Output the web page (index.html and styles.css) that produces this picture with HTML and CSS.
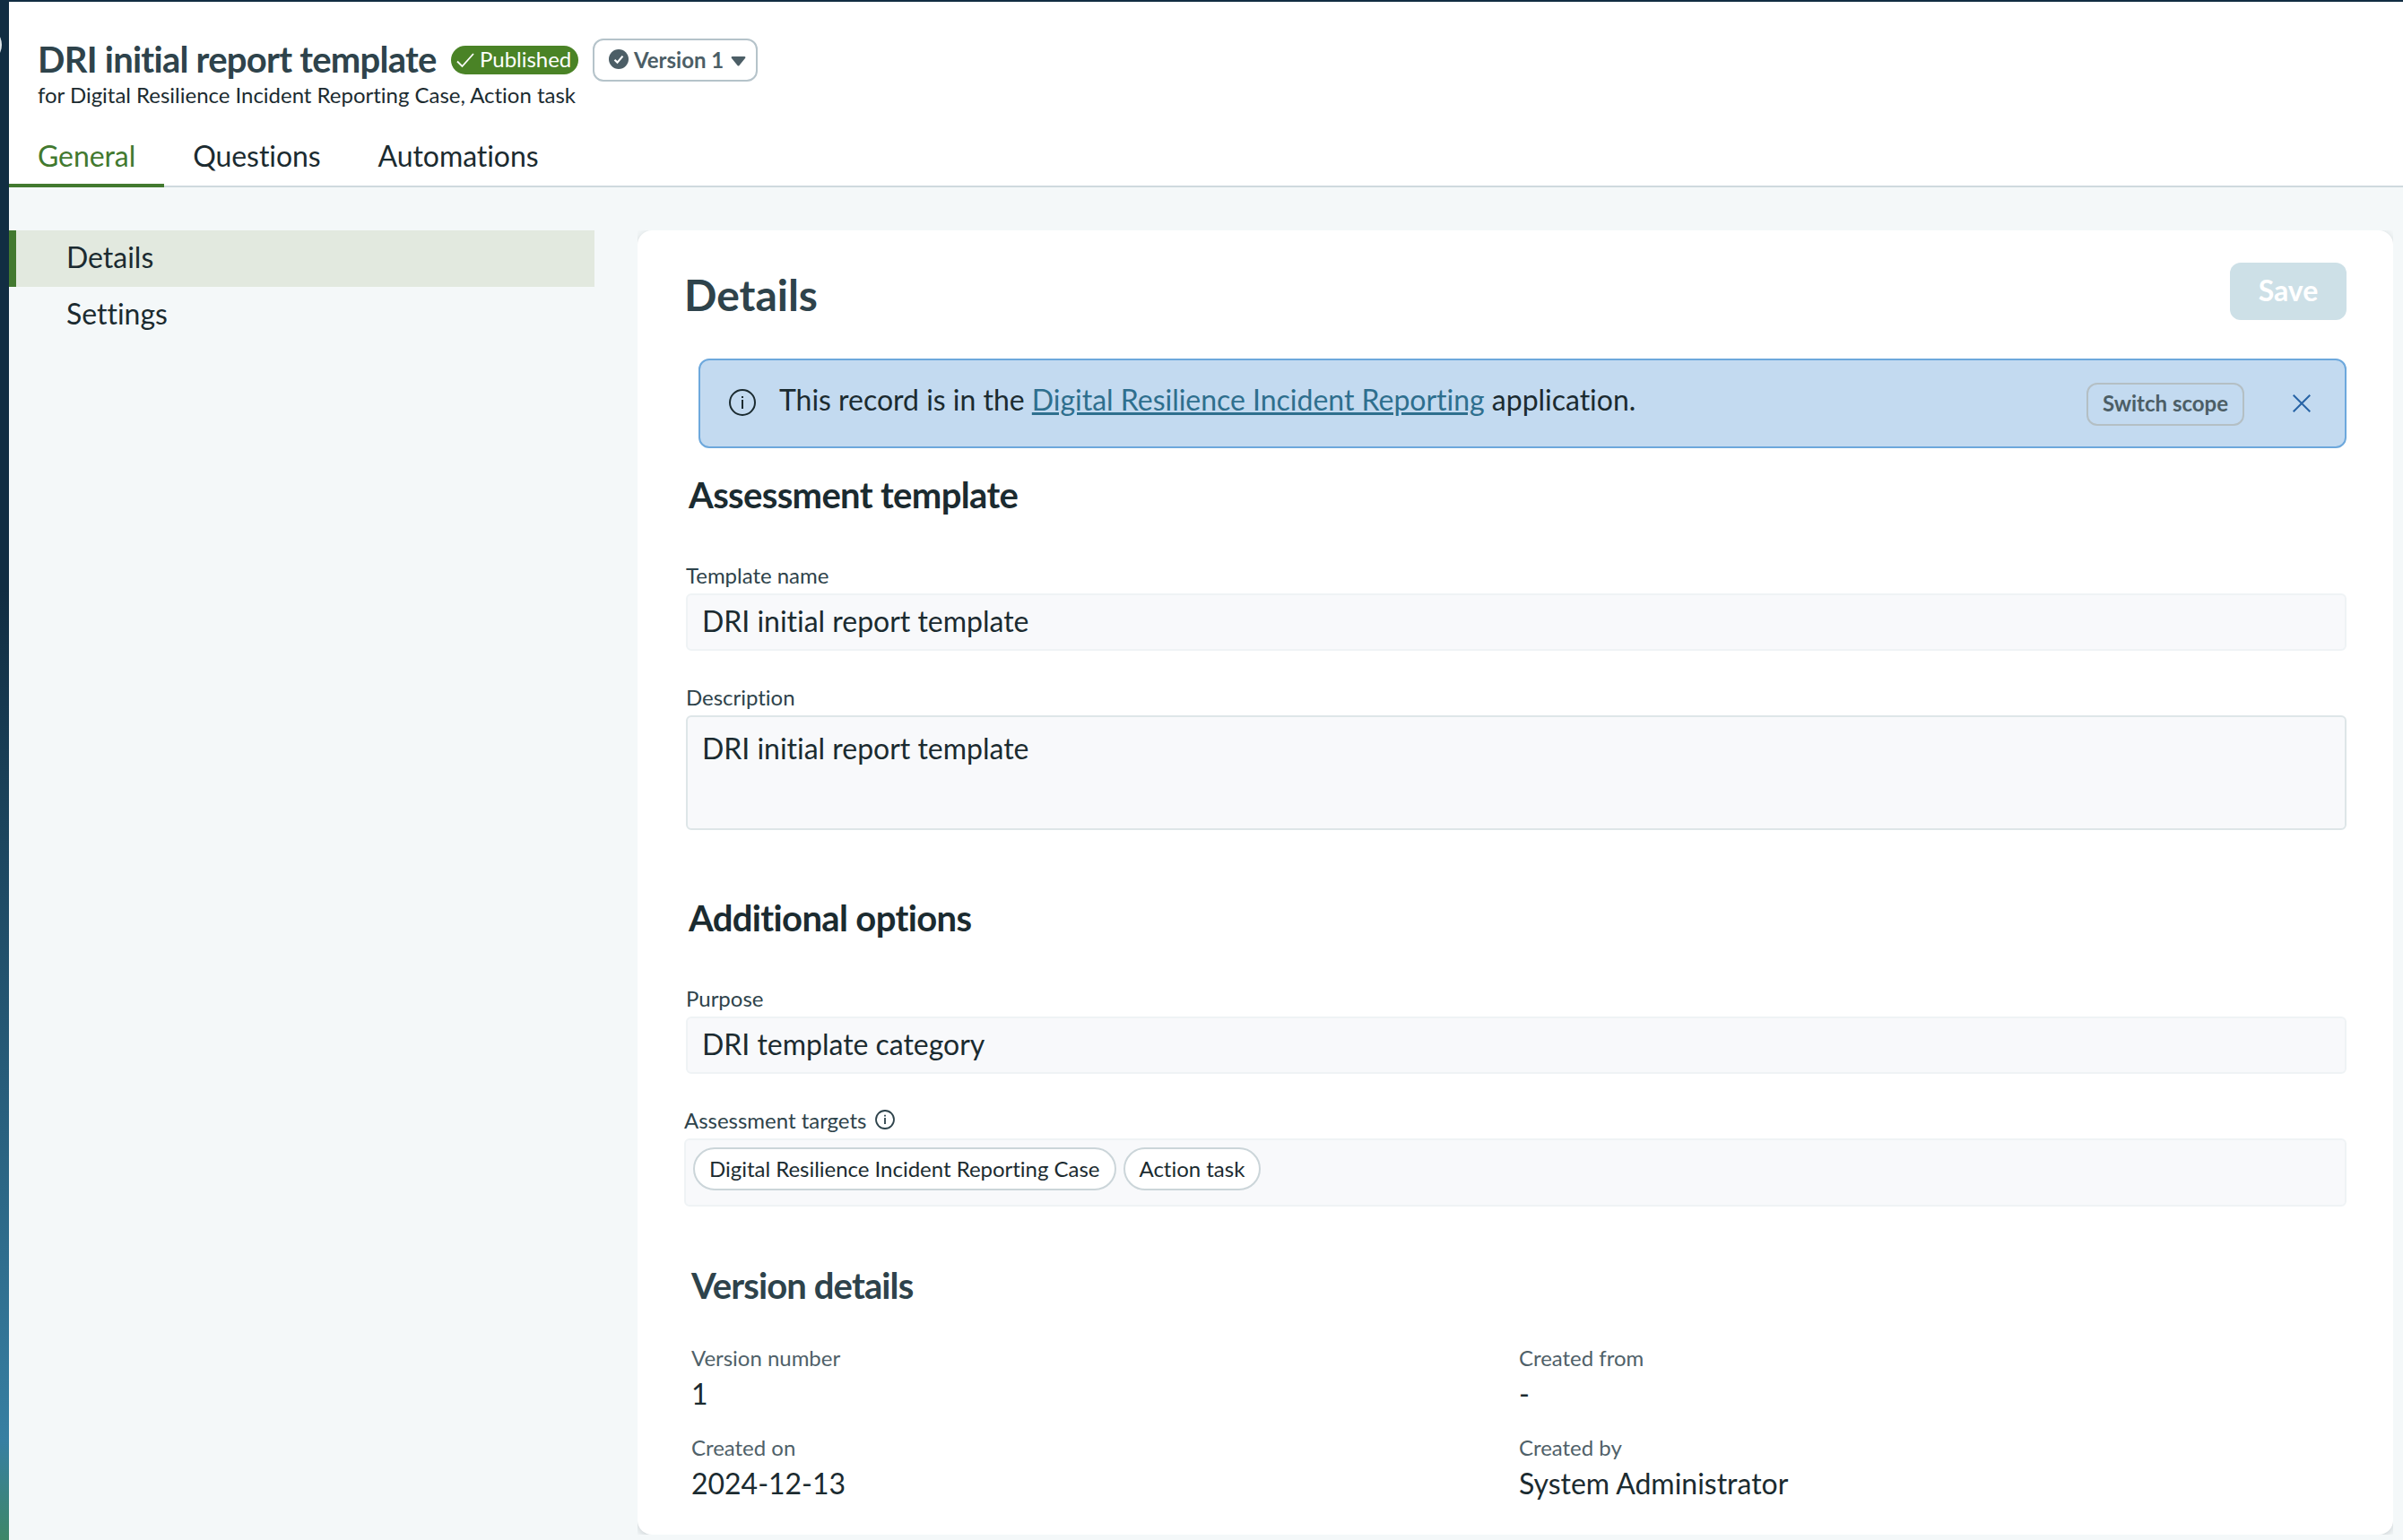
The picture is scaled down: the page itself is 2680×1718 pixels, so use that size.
FILE: index.html
```html
<!DOCTYPE html>
<html lang="en">
<head>
    <meta charset="UTF-8">
    <meta name="viewport" content="width=device-width, initial-scale=1.0">
    <title>DRI initial report template</title>
    <link rel="stylesheet" href="styles.css">
</head>
<body>
    <div class="app">
        <div class="nav-strip"></div>

        <div class="page">
            <!-- Header -->
            <header class="header">
                <div class="title-row">
                    <h1>DRI initial report template</h1>
                    <span class="badge">
                        <svg width="22" height="18" viewBox="0 0 22 18"><path d="M2 10.5L7.5 16L20 2" fill="none" stroke="currentColor" stroke-width="1.8"/></svg>
                        <span>Published</span>
                    </span>
                    <button class="version-btn">
                        <svg class="check" width="22" height="22" viewBox="0 0 22 22"><circle cx="11" cy="11" r="11" fill="currentColor"/><path d="M6.5 11.8L9.5 14.6L15.5 7.6" fill="none" stroke="#fff" stroke-width="2.2"/></svg>
                        <span>Version 1</span>
                        <svg class="caret" width="17" height="11" viewBox="0 0 17 11"><path d="M1.5 0H15.5Q17 0.4 16.2 1.8L9.3 10.2Q8.5 11 7.7 10.2L0.8 1.8Q0 0.4 1.5 0Z" fill="currentColor"/></svg>
                    </button>
                </div>
                <p class="subtitle">for Digital Resilience Incident Reporting Case, Action task</p>
                <nav class="tabs">
                    <a class="tab active">General</a>
                    <a class="tab">Questions</a>
                    <a class="tab">Automations</a>
                </nav>
            </header>

            <div class="content">
                <!-- Side menu -->
                <aside class="sidebar">
                    <a class="side-item active">Details</a>
                    <a class="side-item">Settings</a>
                </aside>

                <div class="card-wrap">
                    <main class="card">
                        <div class="card-head">
                            <h2>Details</h2>
                            <button class="save-btn" disabled>Save</button>
                        </div>

                        <div class="alert">
                            <svg class="alert-icon" width="30" height="30" viewBox="0 0 30 30"><circle cx="15" cy="15" r="14" fill="none" stroke="currentColor" stroke-width="2"/><path d="M15 12V22M15 8V10" stroke="currentColor" stroke-width="2"/></svg>
                            <p>This record is in the <a>Digital Resilience Incident Reporting</a> application.</p>
                            <button class="scope-btn">Switch scope</button>
                            <svg class="close" width="20" height="20" viewBox="0 0 20 20"><path d="M0.7 0.7L19.3 19.3M19.3 0.7L0.7 19.3" stroke="currentColor" stroke-width="2"/></svg>
                        </div>

                        <!-- Assessment template -->
                        <h3 class="heading-template">Assessment template</h3>
                        <div class="field">
                            <label>Template name</label>
                            <div class="input">DRI initial report template</div>
                        </div>
                        <div class="field">
                            <label>Description</label>
                            <div class="input textarea">DRI initial report template</div>
                        </div>

                        <!-- Additional options -->
                        <h3 class="heading-options">Additional options</h3>
                        <div class="field">
                            <label>Purpose</label>
                            <div class="input">DRI template category</div>
                        </div>
                        <div class="field targets">
                            <label>Assessment targets
                                <svg width="22" height="22" viewBox="0 0 22 22"><circle cx="11" cy="11" r="10" fill="none" stroke="currentColor" stroke-width="1.8"/><path d="M11 9V16M11 5.8V7.6" stroke="currentColor" stroke-width="1.8"/></svg>
                            </label>
                            <div class="pills">
                                <span class="pill">Digital Resilience Incident Reporting Case</span>
                                <span class="pill">Action task</span>
                            </div>
                        </div>

                        <!-- Version details -->
                        <h3 class="heading-version">Version details</h3>
                        <dl class="version-grid">
                            <div>
                                <dt>Version number</dt>
                                <dd>1</dd>
                            </div>
                            <div>
                                <dt>Created from</dt>
                                <dd>-</dd>
                            </div>
                            <div>
                                <dt>Created on</dt>
                                <dd>2024-12-13</dd>
                            </div>
                            <div>
                                <dt>Created by</dt>
                                <dd>System Administrator</dd>
                            </div>
                        </dl>
                    </main>
                </div>
            </div>
        </div>
    </div>
</body>
</html>
```
FILE: styles.css
```css
/* Reset & Base Styles */
* {
    box-sizing: border-box;
    margin: 0;
    padding: 0;
}

body {
    font-family: Lato, 'Liberation Sans', sans-serif;
    font-size: 32px;
    font-variant-ligatures: none;
    letter-spacing: -0.02px;
    color: #1b2b30;
    background: #f4f8f9;
    overflow: hidden;
}

button {
    font-family: inherit;
    font-weight: 700;
}

svg {
    display: block;
    flex: none;
}

.app {
    display: flex;
    height: 1718px;
    border-top: 2px solid #112d42;
}

/* Edge of the global navigation */
.nav-strip {
    position: relative;
    width: 10px;
    overflow: hidden;
    background: linear-gradient(#112d42 0, #112d42 655px, #377fa2 1605px, #3e8768 1716px);
}

.nav-strip::before {
    content: "";
    position: absolute;
    left: -38px;
    top: 28px;
    width: 40px;
    height: 40px;
    border-radius: 50%;
    background: #dfe5e8;
}

.page {
    flex: 1;
}

/* Header */
.header {
    height: 207px;
    padding-top: 41px;
    background: #fff;
    border-bottom: 2px solid #cfd9de;
}

.title-row {
    display: flex;
    align-items: center;
    height: 48px;
    padding-left: 32px;
}

h1 {
    width: 461px;
    padding-bottom: 2px;
    font-size: 40px;
    line-height: 48px;
    letter-spacing: -0.75px;
    white-space: nowrap;
    color: #2e434b;
}

.badge {
    display: flex;
    align-items: center;
    gap: 5px;
    width: 142px;
    height: 32px;
    padding-left: 5px;
    border-radius: 16px;
    background: #4a8326;
    color: #fff;
    font-size: 24px;
    line-height: 30px;
}

.badge span {
    padding-bottom: 2px;
}

.version-btn {
    display: flex;
    align-items: center;
    width: 184px;
    height: 48px;
    margin-left: 16px;
    padding-left: 16px;
    border: 2px solid #b5c3ca;
    border-radius: 12px;
    background: #fff;
    color: #4c5e66;
    font-size: 24px;
}

.version-btn span {
    width: 108px;
    margin-left: 6px;
    padding-bottom: 2px;
    text-align: left;
}

.version-btn .check {
    margin-top: -2px;
}

.version-btn .caret {
    margin-top: 2px;
}

.subtitle {
    padding-left: 32px;
    font-size: 24px;
    line-height: 30px;
}

.tabs {
    display: flex;
    margin-top: 31px;
    letter-spacing: -0.07px;
}

.tab {
    height: 57px;
    padding: 0 32px;
    line-height: 44px;
    border-bottom: 4px solid transparent;
}

.tab.active {
    color: #42792f;
    border-bottom-color: #42792f;
}

/* Content */
.content {
    display: flex;
    gap: 48px;
    padding-top: 48px;
}

.sidebar {
    width: 653px;
}

.side-item {
    display: block;
    height: 63px;
    padding-left: 56px;
    line-height: 60px;
    border-left: 8px solid transparent;
}

.side-item.active {
    background: #e2e9df;
    border-left-color: #42792f;
}

.card-wrap {
    width: 1958px;
    height: 1455px;
    overflow: hidden;
}

.card {
    height: 100%;
    padding: 36px 52px 0;
    background: #fff;
    border-radius: 16px;
    box-shadow: 0 2px 8px rgba(30, 45, 55, 0.2);
}

.card-head {
    display: flex;
    justify-content: space-between;
    height: 64px;
}

h2 {
    font-size: 48px;
    line-height: 71px;
    color: #2e434b;
}

.save-btn {
    width: 130px;
    height: 64px;
    padding-bottom: 3px;
    border: 0;
    border-radius: 12px;
    background: #cde0e7;
    color: #fff;
    font-size: 32px;
}

/* Info message */
.alert {
    display: flex;
    align-items: center;
    height: 100px;
    margin: 43px 0 0 16px;
    padding: 0 38px 0 32px;
    border: 2px solid #6da8dc;
    border-radius: 12px;
    background: #c3daf0;
}

.alert-icon {
    margin-top: -2px;
}

.alert p {
    flex: 1;
    margin-left: 26px;
    padding-bottom: 9px;
}

.alert a {
    color: #2e6f8e;
    text-decoration: underline;
    text-decoration-thickness: 3px;
}

.scope-btn {
    width: 176px;
    height: 48px;
    margin: 2px 54px 0 0;
    padding-bottom: 3px;
    border: 2px solid #b4bfc4;
    border-radius: 12px;
    background: transparent;
    color: #4c5e66;
    font-size: 24px;
}

.close {
    color: #2763a5;
}

/* Form */
h3 {
    margin-left: 5px;
    font-size: 40px;
    line-height: 48px;
    letter-spacing: -0.65px;
}

.heading-template {
    margin-top: 28px;
}

.heading-options {
    margin-top: 74px;
}

.heading-version {
    margin: 64px 0 0 8px;
    letter-spacing: -0.88px;
    color: #2e434b;
}

.field {
    margin: 36px 0 0 2px;
}

h3 + .field {
    margin-top: 50px;
}

label {
    display: flex;
    align-items: center;
    font-size: 24px;
    line-height: 32px;
    height: 36px;
    padding-bottom: 4px;
    color: #2e434b;
}

.input {
    height: 64px;
    padding: 0 16px;
    line-height: 58px;
    border: 2px solid #eff3f5;
    border-radius: 6px;
    background: #f8f9fb;
}

.textarea {
    height: 128px;
    padding-top: 6px;
    border-color: #dee6e8;
}

.field.targets {
    margin-left: 0;
}

.targets label svg {
    margin: -2px 0 0 10px;
}

.pills {
    display: flex;
    gap: 8px;
    height: 76px;
    padding: 8px;
    border: 2px solid #eff3f5;
    border-radius: 6px;
    background: #f8f9fb;
}

.pill {
    height: 48px;
    padding: 0 16px;
    font-size: 24px;
    line-height: 44px;
    border: 2px solid #cbd5d9;
    border-radius: 24px;
    background: #fff;
}

.version-grid {
    display: grid;
    grid-template-columns: 923px 1fr;
    row-gap: 20px;
    margin: 39px 0 0 8px;
}

dt {
    font-size: 24px;
    line-height: 36px;
    color: #4f6169;
}

dd {
    line-height: 44px;
}
```
